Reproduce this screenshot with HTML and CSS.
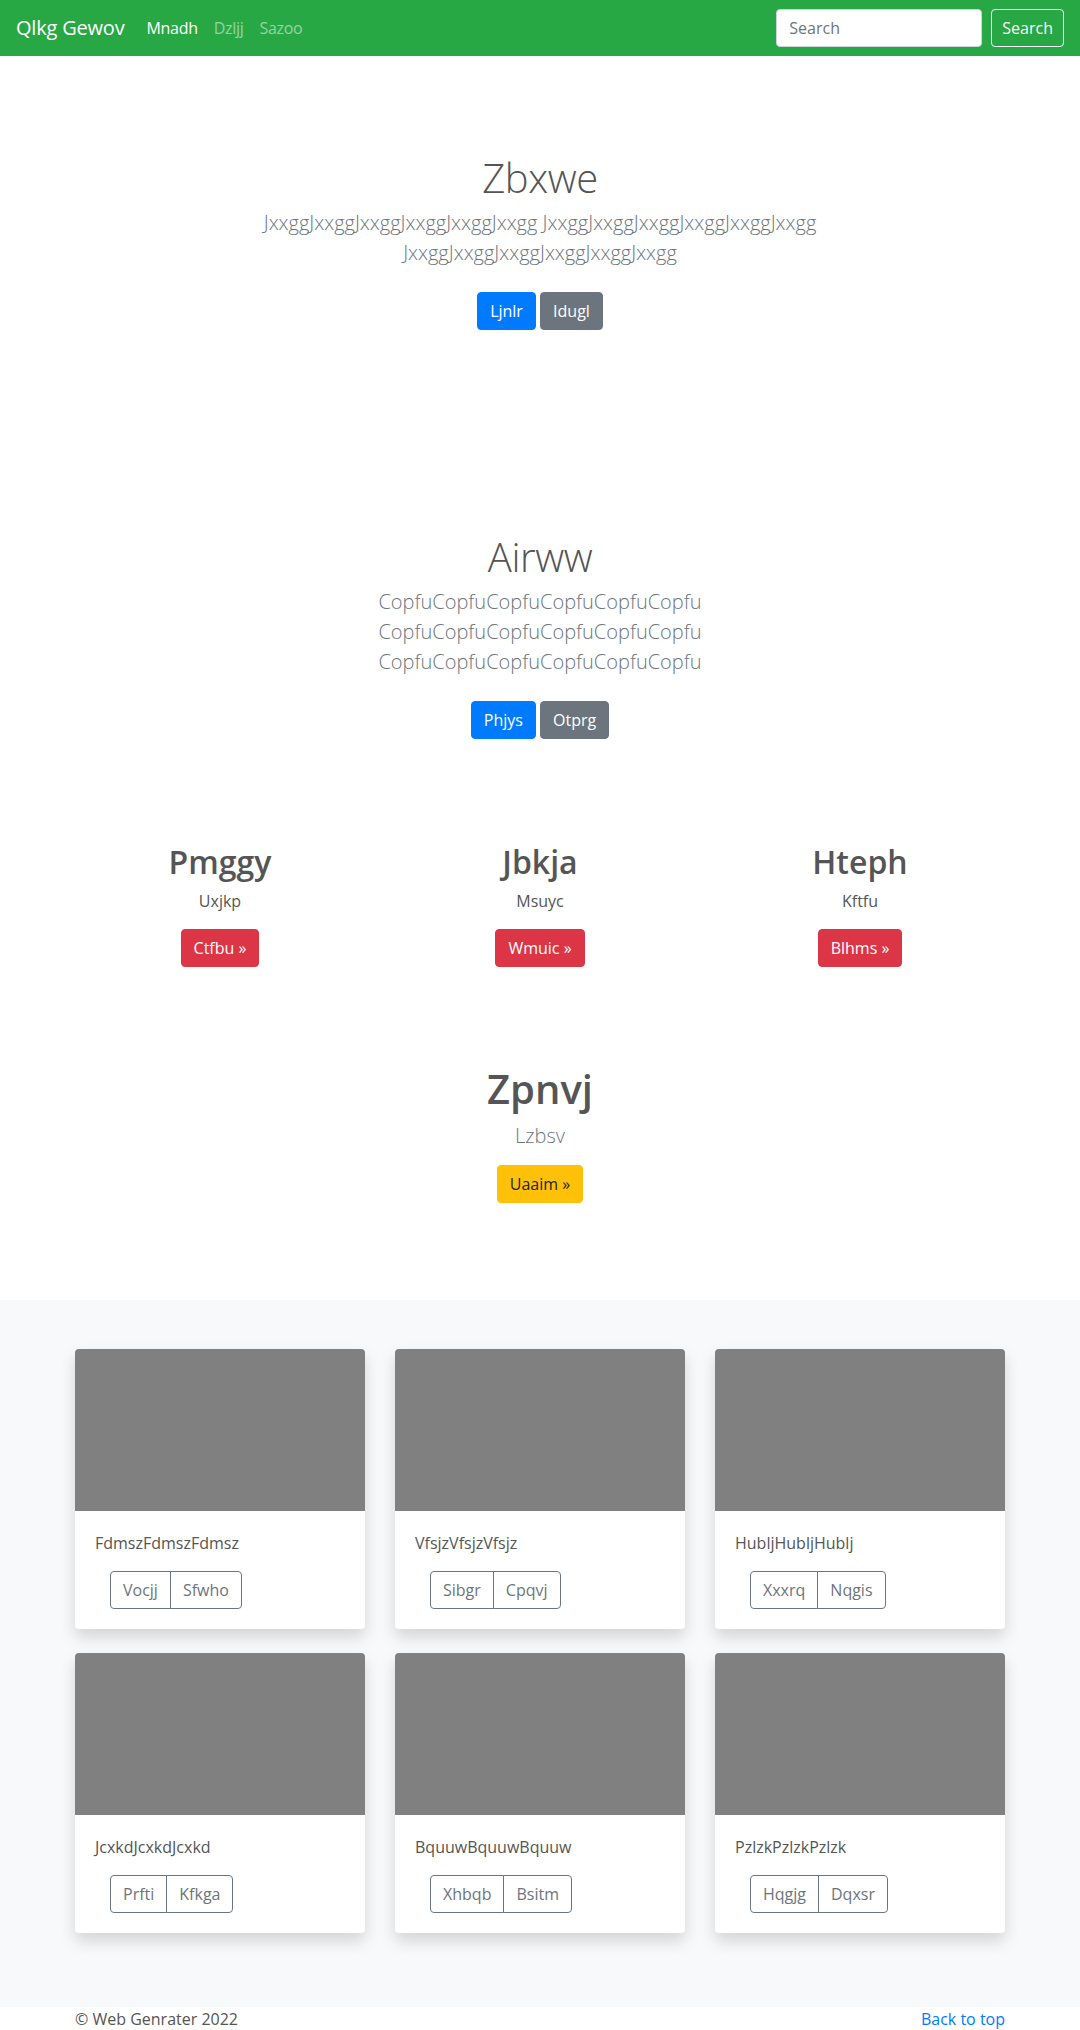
FILE: index.html
```html
<!DOCTYPE html>
<html lang="en">
<head>
<meta charset="utf-8">
<title>Qlkg Gewov</title>
<link rel="stylesheet" href="styles.css">
</head>
<body>
<nav class="navbar">
  <a class="brand" href="#">Qlkg Gewov</a>
  <ul class="nav-links">
    <li><a class="nav-link active" href="#">Mnadh</a></li>
    <li><a class="nav-link" href="#">Dzljj</a></li>
    <li><a class="nav-link" href="#">Sazoo</a></li>
  </ul>
  <form class="search-form">
    <input class="search-input" type="text" placeholder="Search">
    <button class="btn btn-outline-light" type="button">Search</button>
  </form>
</nav>

<main>
  <section class="hero hero-first">
    <div class="container">
      <h1 class="hero-title">Zbxwe</h1>
      <p class="lead muted">JxxggJxxggJxxggJxxggJxxggJxxgg JxxggJxxggJxxggJxxggJxxggJxxgg JxxggJxxggJxxggJxxggJxxggJxxgg</p>
      <p class="actions">
        <a class="btn btn-primary" href="#">Ljnlr</a>
        <a class="btn btn-secondary" href="#">Idugl</a>
      </p>
    </div>
  </section>

  <section class="hero hero-second">
    <div class="container">
      <h1 class="hero-title">Airww</h1>
      <p class="lead muted">CopfuCopfuCopfuCopfuCopfuCopfu CopfuCopfuCopfuCopfuCopfuCopfu CopfuCopfuCopfuCopfuCopfuCopfu</p>
      <p class="actions">
        <a class="btn btn-primary" href="#">Phjys</a>
        <a class="btn btn-secondary" href="#">Otprg</a>
      </p>
    </div>
  </section>

  <section class="features">
    <div class="container feature-grid">
      <div class="feature">
        <h2 class="feature-title">Pmggy</h2>
        <p class="feature-text">Uxjkp</p>
        <p><a class="btn btn-danger" href="#">Ctfbu &raquo;</a></p>
      </div>
      <div class="feature">
        <h2 class="feature-title">Jbkja</h2>
        <p class="feature-text">Msuyc</p>
        <p><a class="btn btn-danger" href="#">Wmuic &raquo;</a></p>
      </div>
      <div class="feature">
        <h2 class="feature-title">Hteph</h2>
        <p class="feature-text">Kftfu</p>
        <p><a class="btn btn-danger" href="#">Blhms &raquo;</a></p>
      </div>
    </div>
  </section>

  <section class="callout">
    <div class="container">
      <h1 class="callout-title">Zpnvj</h1>
      <p class="lead callout-lead">Lzbsv</p>
      <p class="callout-actions"><a class="btn btn-warning" href="#">Uaaim &raquo;</a></p>
    </div>
  </section>

  <section class="album">
    <div class="container card-grid">
      <div class="card">
        <div class="card-img"></div>
        <div class="card-body">
          <p class="card-text">FdmszFdmszFdmsz</p>
          <div class="card-actions">
            <div class="btn-group">
              <button class="btn btn-outline-secondary" type="button">Vocjj</button>
              <button class="btn btn-outline-secondary" type="button">Sfwho</button>
            </div>
          </div>
        </div>
      </div>
      <div class="card">
        <div class="card-img"></div>
        <div class="card-body">
          <p class="card-text">VfsjzVfsjzVfsjz</p>
          <div class="card-actions">
            <div class="btn-group">
              <button class="btn btn-outline-secondary" type="button">Sibgr</button>
              <button class="btn btn-outline-secondary" type="button">Cpqvj</button>
            </div>
          </div>
        </div>
      </div>
      <div class="card">
        <div class="card-img"></div>
        <div class="card-body">
          <p class="card-text">HubljHubljHublj</p>
          <div class="card-actions">
            <div class="btn-group">
              <button class="btn btn-outline-secondary" type="button">Xxxrq</button>
              <button class="btn btn-outline-secondary" type="button">Nqgis</button>
            </div>
          </div>
        </div>
      </div>
      <div class="card">
        <div class="card-img"></div>
        <div class="card-body">
          <p class="card-text">JcxkdJcxkdJcxkd</p>
          <div class="card-actions">
            <div class="btn-group">
              <button class="btn btn-outline-secondary" type="button">Prfti</button>
              <button class="btn btn-outline-secondary" type="button">Kfkga</button>
            </div>
          </div>
        </div>
      </div>
      <div class="card">
        <div class="card-img"></div>
        <div class="card-body">
          <p class="card-text">BquuwBquuwBquuw</p>
          <div class="card-actions">
            <div class="btn-group">
              <button class="btn btn-outline-secondary" type="button">Xhbqb</button>
              <button class="btn btn-outline-secondary" type="button">Bsitm</button>
            </div>
          </div>
        </div>
      </div>
      <div class="card">
        <div class="card-img"></div>
        <div class="card-body">
          <p class="card-text">PzlzkPzlzkPzlzk</p>
          <div class="card-actions">
            <div class="btn-group">
              <button class="btn btn-outline-secondary" type="button">Hqgjg</button>
              <button class="btn btn-outline-secondary" type="button">Dqxsr</button>
            </div>
          </div>
        </div>
      </div>
    </div>
  </section>
</main>

<footer class="footer">
  <div class="container footer-row">
    <p class="copyright">&copy; Web Genrater 2022</p>
    <p class="back-top"><a href="#">Back to top</a></p>
  </div>
</footer>
</body>
</html>
```

FILE: styles.css
```css
* { box-sizing: border-box; }

html, body {
  margin: 0;
  padding: 0;
}

body {
  font-family: "Open Sans", "Noto Sans", "Liberation Sans", sans-serif;
  font-size: 16px;
  line-height: 1.5;
  color: #555555;
  background: #ffffff;
}

a { text-decoration: none; }

p { margin: 0 0 16px; }

h1, h2 { margin: 0 0 8px; line-height: 1.2; }

.container {
  width: 960px;
  margin: 0 auto;
  padding: 0 15px;
}

/* Navbar */
.navbar {
  height: 56px;
  background: #28a745;
  display: flex;
  align-items: center;
  padding: 8px 16px;
}

.brand {
  color: #ffffff;
  font-size: 20px;
  line-height: 30px;
  margin-right: 14px;
  white-space: nowrap;
  letter-spacing: -0.2px;
}

.nav-links {
  list-style: none;
  margin: 0;
  padding: 0;
  display: flex;
  flex: 1;
}

.nav-link {
  display: block;
  padding: 8px 8px;
  color: rgba(255, 255, 255, 0.5);
  font-size: 16px;
  letter-spacing: -0.3px;
}

.nav-link.active {
  color: #ffffff;
  font-weight: 500;
}

.search-form {
  display: flex;
  align-items: center;
}

.search-input {
  width: 206px;
  height: 38px;
  padding: 6px 12px;
  font-family: inherit;
  font-size: 16px;
  color: #495057;
  border: 1px solid #ced4da;
  border-radius: 4px;
  margin-right: 9px;
  background: #ffffff;
}

.search-input::placeholder { color: #6c757d; }

/* Buttons */
.btn {
  display: inline-block;
  font-family: inherit;
  font-size: 16px;
  line-height: 24px;
  padding: 6px 12px;
  border: 1px solid transparent;
  border-radius: 4px;
  text-align: center;
  cursor: pointer;
  background: transparent;
  vertical-align: middle;
}

.btn-outline-light {
  color: #f8f9fa;
  border-color: #f8f9fa;
  padding: 6px 10px;
}

.btn-primary { background: #007bff; border-color: #007bff; color: #ffffff; }
.btn-secondary { background: #6c757d; border-color: #6c757d; color: #ffffff; }
.btn-danger { background: #dc3545; border-color: #dc3545; color: #ffffff; }
.btn-warning { background: #ffc107; border-color: #ffc107; color: #212529; }

.btn-outline-secondary {
  color: #6c757d;
  border-color: #6c757d;
  background: #ffffff;
}

/* Hero sections */
.hero {
  text-align: center;
  padding: 98px 0;
}

.hero-second {
  padding-top: 97px;
  padding-bottom: 96px;
}

.hero-title {
  font-size: 40px;
  font-weight: 300;
  color: #555555;
  margin-bottom: 6px;
  letter-spacing: -0.4px;
}

.lead {
  font-size: 20px;
  font-weight: 300;
  line-height: 30px;
}

.muted {
  color: #6c757d;
  max-width: 610px;
  margin-left: auto;
  margin-right: auto;
}

.actions {
  margin: 0;
}

.actions .btn {
  margin: 8px 0;
}

/* Features */
.features {
  padding: 0 0 34px;
}

.feature-grid {
  display: grid;
  grid-template-columns: repeat(3, 1fr);
  gap: 30px;
}

.feature {
  text-align: center;
}

.feature-title {
  font-size: 32px;
  font-weight: 600;
  color: #555555;
}

.feature-text {
  margin-bottom: 16px;
}

/* Callout */
.callout {
  text-align: center;
  padding: 48px 0 97px;
}

.callout-title {
  font-size: 40px;
  font-weight: 600;
  color: #555555;
}

.callout-lead {
  color: #6c757d;
  margin-bottom: 14px;
}

.callout-actions { margin: 0; }

/* Album */
.album {
  background: #f8f9fa;
  padding: 49px 0 74px;
}

.card-grid {
  display: grid;
  grid-template-columns: repeat(3, 1fr);
  column-gap: 30px;
  row-gap: 24px;
}

.card {
  background: #ffffff;
  border-radius: 4px;
  box-shadow: 0 8px 16px rgba(0, 0, 0, 0.15);
  overflow: hidden;
}

.card-img {
  height: 162px;
  background: #808080;
}

.card-body {
  padding: 20px;
}

.card-text {
  margin-bottom: 16px;
}

.card-actions {
  padding: 0 15px;
  display: flex;
}

.btn-group {
  display: inline-flex;
}

.btn-group .btn:first-child {
  border-top-right-radius: 0;
  border-bottom-right-radius: 0;
}

.btn-group .btn + .btn {
  margin-left: -1px;
  border-top-left-radius: 0;
  border-bottom-left-radius: 0;
}

/* Footer */
.footer {
  padding: 0;
}

.footer-row {
  display: flex;
  justify-content: space-between;
}

.copyright, .back-top { margin: 0 0 16px; }

.back-top a { color: #007bff; }
```
